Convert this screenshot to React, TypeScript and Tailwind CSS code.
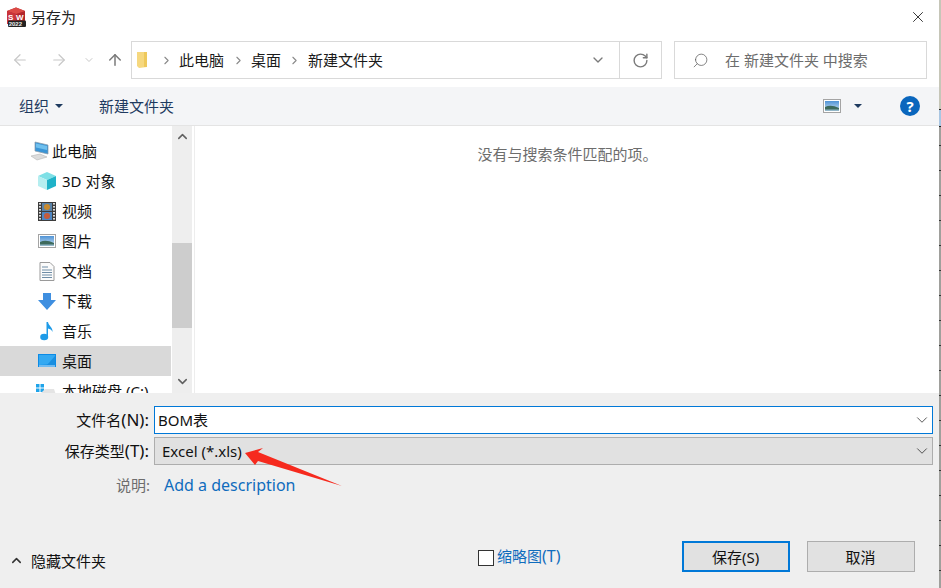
import { ChevronDown, ChevronRight, ChevronUp, ArrowLeft, ArrowRight, ArrowUp, RotateCw, X, Search } from "lucide-react";
import type { ReactNode } from "react";

const FONT = "font-['Noto_Sans','Noto_Sans_CJK_SC',sans-serif]";

function SwLogo() {
  return (
    <svg width="20" height="20" viewBox="0 0 20 20" className="shrink-0">
      <path d="M1 4 L10 0.5 L19 4 V17 H1 Z" fill="#b3262b" />
      <path d="M10 0.5 L19 4 L10 7 L1 4 Z" fill="#dc4a45" />
      <path d="M1 4 L10 7 V17 H1 Z" fill="#c9343a" />
      <text x="2" y="12.5" fontSize="8" fontWeight="700" fill="#fff" fontFamily="Liberation Sans">S</text>
      <text x="10" y="12.5" fontSize="8" fontWeight="700" fill="#fff" fontFamily="Liberation Sans">W</text>
      <rect x="2" y="13.5" width="18" height="6.5" rx="1" fill="#222" />
      <text x="2.7" y="19" fontSize="6" fontWeight="700" fill="#eee" fontFamily="Liberation Sans">2022</text>
    </svg>
  );
}

function PcIcon() {
  return (
    <svg width="22" height="20" viewBox="0 0 22 20" className="shrink-0">
      <path d="M6 1 L19 4 V13 L6 10 Z" fill="#3b95d6" stroke="#8a9aa6" strokeWidth="0.7" />
      <path d="M7 2.5 L18 5 V9 L7 6.5 Z" fill="#6fc0ee" />
      <path d="M2 15 L11 13 L18 16 L8 19 Z" fill="#dcdcdc" stroke="#b5b5b5" strokeWidth="0.6" />
    </svg>
  );
}
function CubeIcon() {
  return (
    <svg width="18" height="18" viewBox="0 0 18 18" className="shrink-0">
      <path d="M9 0 L18 4 L9 8 L0 4 Z" fill="#7ee0e6" />
      <path d="M0 4 L9 8 V18 L0 14 Z" fill="#b5eef0" />
      <path d="M18 4 L9 8 V18 L18 14 Z" fill="#1fb2c8" />
    </svg>
  );
}
function FilmIcon() {
  return (
    <svg width="18" height="19" viewBox="0 0 18 19" className="shrink-0">
      <rect width="18" height="19" fill="#3c3c3c" />
      <rect x="4" y="1" width="10" height="8" fill="#5b83a8" />
      <rect x="4" y="10" width="10" height="8" fill="#4e86c2" />
      <circle cx="9" cy="5" r="3" fill="#c98a2e" />
      <circle cx="9" cy="14" r="3" fill="#c65b3a" />
      {[1, 4, 7, 10, 13, 16].map((y) => (
        <g key={y}>
          <rect x="1" y={y} width="2" height="1.6" fill="#ddd" />
          <rect x="15" y={y} width="2" height="1.6" fill="#ddd" />
        </g>
      ))}
    </svg>
  );
}
function PicIcon({ id }: { id: string }) {
  return (
    <svg width="18" height="14" viewBox="0 0 18 14" className="shrink-0">
      <defs>
        <linearGradient id={id} x1="0" y1="0" x2="0" y2="1">
          <stop offset="0" stopColor="#4f93d6" />
          <stop offset="1" stopColor="#cfe3f2" />
        </linearGradient>
      </defs>
      <rect x="0.5" y="0.5" width="17" height="13" fill="#fff" stroke="#a4a4a4" />
      <rect x="2" y="2" width="14" height="10" fill={`url(#${id})`} />
      <path d="M2 8 Q8 5 16 9 V12 H2 Z" fill="#3d6a5c" />
      <rect x="2" y="10.5" width="14" height="1.5" fill="#93b7c9" />
    </svg>
  );
}
function DocIcon() {
  return (
    <svg width="16" height="19" viewBox="0 0 16 19" className="shrink-0">
      <path d="M1 .5 H11 L15 4.5 V18.5 H1 Z" fill="#fbfbfb" stroke="#9a9a9a" />
      <path d="M3 5 H9 M3 8 H13 M3 10.5 H13 M3 13 H13 M3 15.5 H13" stroke="#6f8da6" strokeWidth="1" />
    </svg>
  );
}
function DownIcon() {
  return (
    <svg width="18" height="17" viewBox="0 0 18 17" className="shrink-0">
      <path d="M5 0 H13 V7 H18 L9 17 L0 7 H5 Z" fill="#3f8fe0" />
    </svg>
  );
}
function MusicIcon() {
  return (
    <svg width="14" height="20" viewBox="0 0 14 20" className="shrink-0">
      <ellipse cx="4.2" cy="16" rx="4" ry="3.2" fill="#1e9be8" />
      <path d="M6.5 1 H8 C8.5 5 13 6 12.5 11 C11.5 8.5 10 8 8 7.5 V16 H6.5 Z" fill="#1e9be8" />
    </svg>
  );
}
function DesktopIcon() {
  return (
    <svg width="18" height="14" viewBox="0 0 18 14" className="shrink-0">
      <rect width="18" height="13" fill="#0c8be6" />
      <path d="M1 1 H17 V10 L1 11 Z" fill="#34a9f2" />
      <path d="M9 11 L17 2 V11 Z" fill="#1a8fe0" />
      <rect x="1" y="11.5" width="16" height="1" fill="#d5ecfb" />
    </svg>
  );
}
function WinIcon() {
  return (
    <svg width="20" height="16" viewBox="0 0 20 16" className="shrink-0 -ml-[2px]">
      <path d="M0 1 H3.5 V4.5 H0 Z M4.5 1 H8 V4.5 H4.5 Z M0 5.5 H3.5 V9 H0 Z M4.5 5.5 H8 V9 H4.5 Z" fill="#1fa4ea" />
      <path d="M9 6 H18 L20 12 H3 Z" fill="#e4e4e4" />
    </svg>
  );
}
function FolderIcon() {
  return (
    <svg width="12" height="16" viewBox="0 0 12 16" className="shrink-0">
      <path d="M0 0 H10 V15 L2 16 L0 14 Z" fill="#f6d87f" />
      <path d="M7 0 H10 V15 H7 Z" fill="#eec95c" />
    </svg>
  );
}
function Caret() {
  return <span className="border-x-[4px] border-t-[4px] border-x-transparent border-t-[#1e3a5f] inline-block" />;
}

const tree = [
  { label: "3D 对象", icon: <CubeIcon /> },
  { label: "视频", icon: <FilmIcon /> },
  { label: "图片", icon: <PicIcon id="sky-a" /> },
  { label: "文档", icon: <DocIcon /> },
  { label: "下载", icon: <DownIcon /> },
  { label: "音乐", icon: <MusicIcon /> },
  { label: "桌面", icon: <DesktopIcon />, selected: true },
  { label: "本地磁盘 (C:)", icon: <WinIcon /> },
];

function Combo({ children, focused }: { children: ReactNode; focused?: boolean }) {
  return (
    <div
      className={
        focused
          ? "h-[28px] flex-1 flex items-center border border-[#0078d7] bg-white pl-[3px] pr-[1px] text-[#111]"
          : "h-[28px] flex-1 flex items-center border border-[#adadad] bg-[#e1e1e1] pl-[7px] pr-[1px] text-[#111]"
      }
    >
      <span className="flex-1 -mt-[1px]">{children}</span>
      <ChevronDown size={18} strokeWidth={1} className="text-[#222]" />
    </div>
  );
}

const TICKS = [0, 1, 2, 3, 4, 5, 6, 7, 8, 9, 10, 11, 12, 13, 14, 15, 16, 17];

export default function App() {
  return (
    <div className={`${FONT} flex w-[941px] h-[588px] overflow-hidden text-[15px] leading-[20px] bg-white text-[#111]`}>
      <div className="relative w-[939px] h-[588px] flex flex-col">
        {/* title bar */}
        <div className="h-[41px] flex items-start shrink-0">
          <div className="flex items-center gap-[5px] pl-[6px] pt-[7px]">
            <SwLogo />
            <span className="text-[#222]">另存为</span>
          </div>
          <div className="ml-auto pr-[12px] pt-[8px]">
            <X size={18} strokeWidth={1.1} className="text-[#111]" />
          </div>
        </div>

        {/* address row */}
        <div className="h-[46px] flex items-start shrink-0">
          <div className="w-[131px] h-[38px] flex items-center text-[#c8c8c8]">
            <ArrowLeft size={18} strokeWidth={1.6} className="ml-[11px]" />
            <ArrowRight size={18} strokeWidth={1.6} className="ml-[21px]" />
            <ChevronDown size={12} strokeWidth={2} className="ml-[15px]" />
            <ArrowUp size={18} strokeWidth={2} className="ml-[11px] text-[#7a7a7a]" />
          </div>
          <div className="w-[531px] h-[38px] flex items-center border border-[#d9d9d9]">
            <div className="flex-1 flex items-center pl-[5px] text-[#1a1a1a]">
              <FolderIcon />
              <ChevronRight size={13} strokeWidth={2} className="ml-[11px] text-[#8a8a8a]" />
              <span className="ml-[6px]">此电脑</span>
              <ChevronRight size={13} strokeWidth={2} className="ml-[8px] text-[#8a8a8a]" />
              <span className="ml-[6px]">桌面</span>
              <ChevronRight size={13} strokeWidth={2} className="ml-[7px] text-[#8a8a8a]" />
              <span className="ml-[7px]">新建文件夹</span>
            </div>
            <ChevronDown size={16} strokeWidth={2} className="mr-[13px] text-[#7a7a7a]" />
            <div className="w-[42px] h-full flex items-center justify-center border-l border-[#d9d9d9]">
              <RotateCw size={17} strokeWidth={2} className="text-[#7a7a7a]" />
            </div>
          </div>
          <div className="w-[253px] h-[38px] ml-[12px] flex items-center border border-[#d9d9d9] text-[#6d6d6d]">
            <Search size={17} strokeWidth={1} className="ml-[17px] -scale-x-100 text-[#555]" />
            <span className="ml-[16px] whitespace-pre">在 新建文件夹 中搜索</span>
          </div>
        </div>

        {/* toolbar */}
        <div className="h-[39px] shrink-0 flex items-center bg-[#f4f5f7] border-b border-[#e4e4e4] text-[#1e3a5f]">
          <span className="ml-[19px]">组织</span>
          <span className="ml-[6px] flex"><Caret /></span>
          <span className="ml-[36px]">新建文件夹</span>
          <div className="ml-auto flex items-center">
            <PicIcon id="sky-b" />
            <span className="ml-[13px] flex"><Caret /></span>
            <span className="ml-[38px] mr-[19px] w-[20px] h-[20px] rounded-full bg-[#0a66bd] text-white text-[15px] font-bold flex items-center justify-center">?</span>
          </div>
        </div>

        {/* content */}
        <div className="h-[267px] shrink-0 flex overflow-hidden">
          <div className="w-[171px] overflow-hidden pt-[10px]">
            <div className="h-[30px] flex items-center">
              <span className="ml-[29px] w-[23px] flex"><PcIcon /></span>
              <span>此电脑</span>
            </div>
            {tree.map((t) => (
              <div key={t.label} className={t.selected ? "h-[30px] flex items-center bg-[#d9d9d9]" : "h-[30px] flex items-center"}>
                <span className="ml-[38px] w-[24px] shrink-0 flex"><span className="w-[18px] flex justify-center">{t.icon}</span></span>
                <span className="whitespace-nowrap">{t.label}</span>
              </div>
            ))}
          </div>
          <div className="w-[20px] ml-[1px] bg-[#eeeeee] flex flex-col">
            <div className="h-[20px] flex items-center justify-center">
              <ChevronUp size={15} strokeWidth={2.4} className="text-[#606060]" />
            </div>
            <div className="h-[97px]" />
            <div className="h-[85px] bg-[#cdcdcd]" />
            <div className="flex-1" />
            <div className="h-[24px] flex items-center justify-center">
              <ChevronDown size={15} strokeWidth={2.4} className="text-[#606060]" />
            </div>
          </div>
          <div className="flex-1 ml-[2px] border-l border-[#ededed] flex justify-center pt-[18px] pl-[1px] text-[#6d6d6d]">
            没有与搜索条件匹配的项。
          </div>
        </div>

        {/* bottom panel */}
        <div className="flex-1 bg-[#efefef] flex flex-col relative">
          <div className="flex items-center mt-[13px] pr-[6px]">
            <span className="w-[149px] -mt-[1px] text-right">文件名<span className="text-[17px]">(N):</span></span>
            <div className="ml-[5px] flex-1 flex"><Combo focused>BOM表</Combo></div>
          </div>
          <div className="flex items-center mt-[3px] pr-[6px]">
            <span className="w-[149px] text-right">保存类型<span className="text-[17px]">(T):</span></span>
            <div className="ml-[5px] flex-1 flex"><Combo>Excel (*.xls)</Combo></div>
          </div>
          <div className="flex items-center mt-[10px]">
            <span className="w-[150px] text-right text-[#6d6d6d]">说明:</span>
            <span className="ml-[14px] text-[16px] text-[#0f6cbd]">Add a description</span>
          </div>
          <div className="mt-auto flex items-center h-[62px] pb-[1px]">
            <div className="flex items-center pt-[8px]">
              <ChevronUp size={15} strokeWidth={2.4} className="ml-[9px] text-[#333]" />
              <span className="ml-[7px]">隐藏文件夹</span>
            </div>
            <div className="ml-[372px] flex items-center">
              <span className="w-[16px] h-[16px] mt-[2px] border border-[#333] bg-white" />
              <span className="ml-[3px] -mt-[1px] text-[#0f6cbd]">缩略图<span className="text-[16px]">(T)</span></span>
            </div>
            <button className="ml-[121px] w-[108px] h-[31px] border-[2px] border-[#0078d7] bg-[#e1e1e1] text-[#111]">保存(S)</button>
            <button className="ml-[17px] w-[108px] h-[31px] border border-[#adadad] bg-[#e1e1e1] text-[#111]">取消</button>
          </div>
          {/* red annotation arrow */}
          <svg width="110" height="50" viewBox="0 0 110 50" className="absolute left-[240px] top-[46px]">
            <path d="M5 14 L23 9 L18 13 L102 47 L18 22 L15 26 Z" fill="#f62a1e" />
          </svg>
        </div>
      </div>

      {/* neighbouring window edge */}
      <div className="w-[2px] h-[588px] shrink-0 flex flex-col overflow-hidden bg-[#a0a09c]">
        <div className="h-[109px] shrink-0 bg-[#c6c6b8]" />
        <div className="h-[18px] shrink-0 bg-[#a9c6e2] border-y border-[#222]" />
        <div className="h-[18px] shrink-0" />
        {TICKS.map((i) => (
          <div key={i} className="h-[25px] shrink-0 border-t border-[#333]" />
        ))}
      </div>
    </div>
  );
}
